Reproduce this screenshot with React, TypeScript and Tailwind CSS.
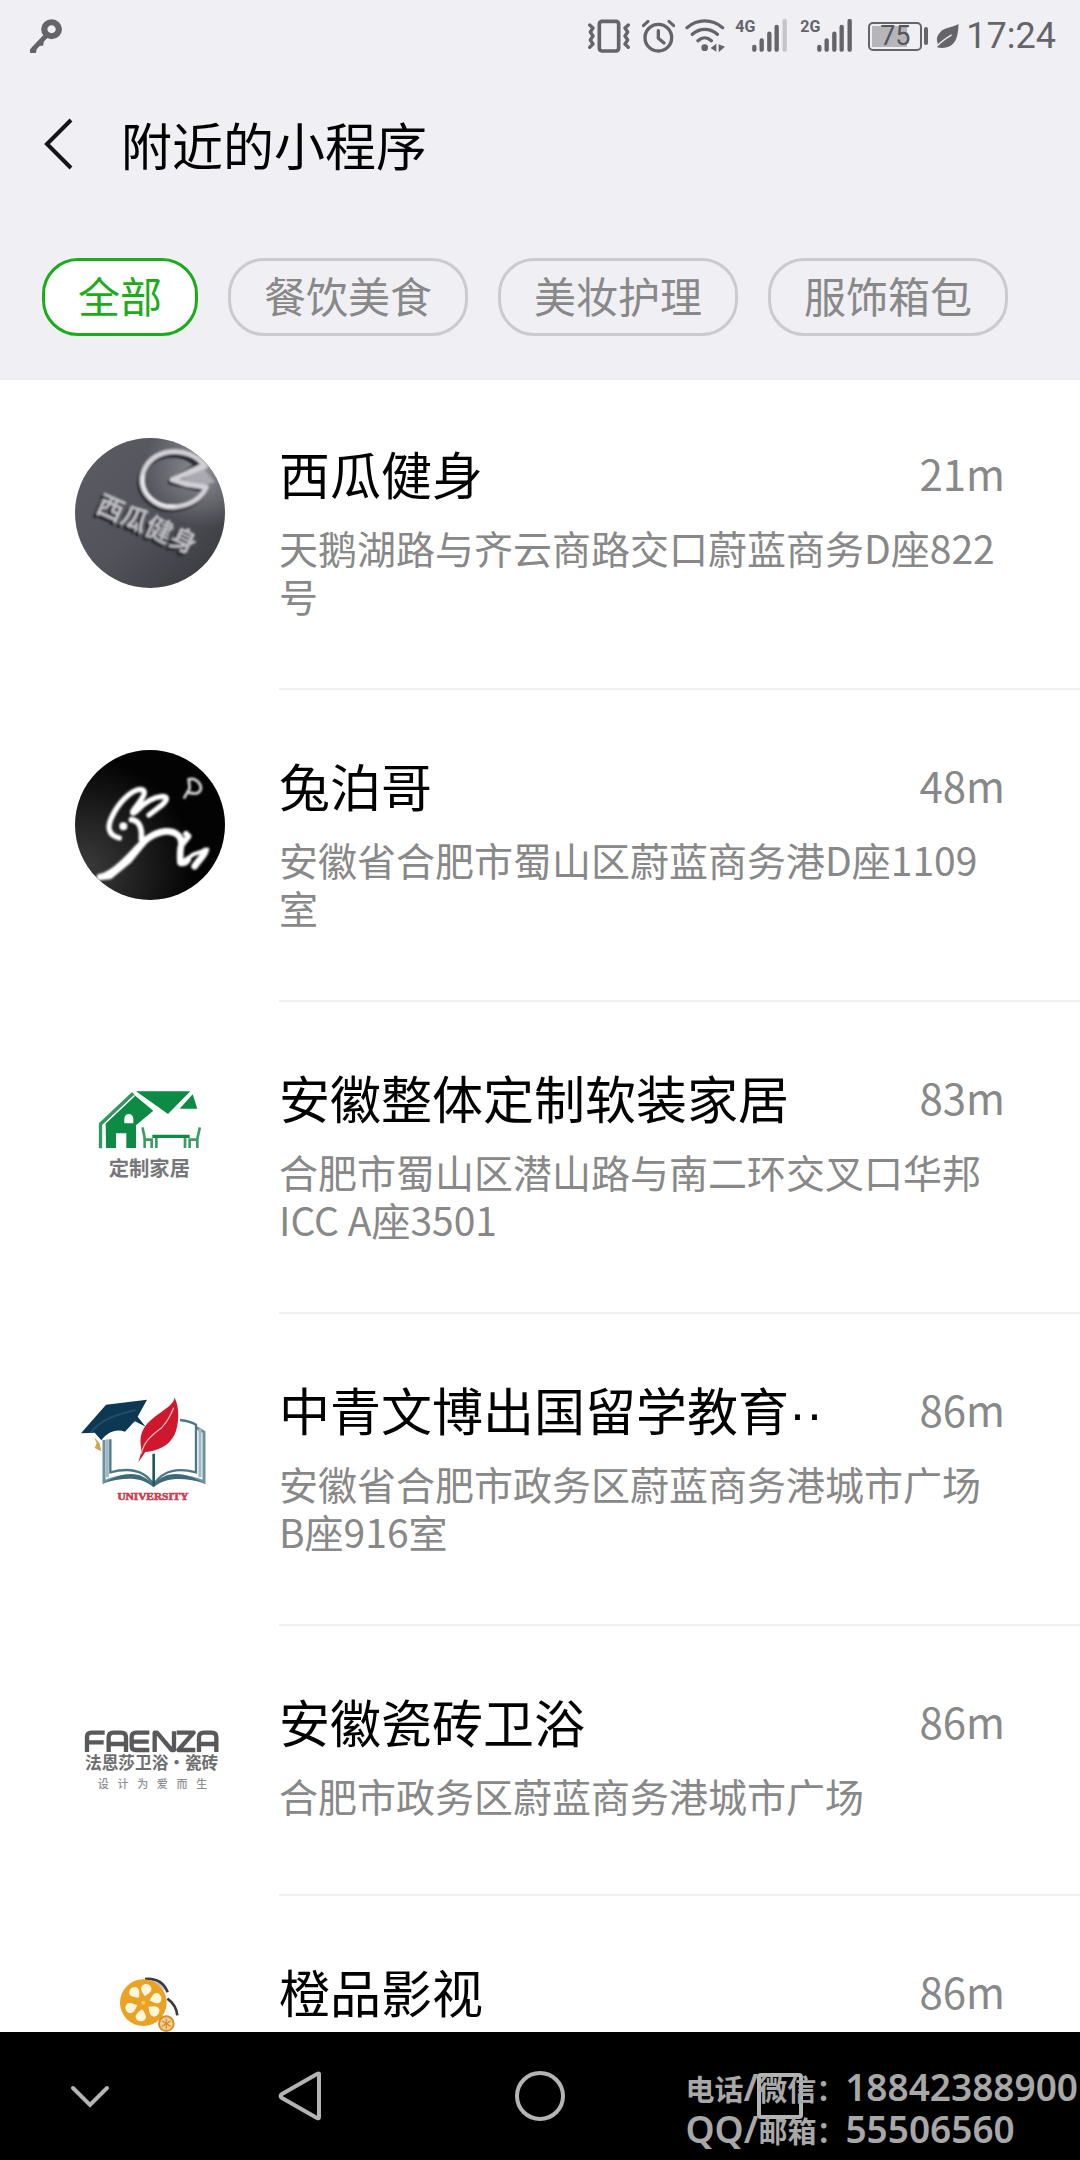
import type { ReactNode } from "react";

type Place = {
  name: string;
  clipped?: boolean;
  address?: string;
  distance: string;
  logo: ReactNode;
};

const GREY = "#646469";

function KeyIcon() {
  return (
    <svg className="h-[34px] w-8" viewBox="88 57 92 103" preserveAspectRatio="none" fill="none" aria-hidden="true">
      <circle cx="150" cy="88" r="21" stroke={GREY} strokeWidth="18" />
      <path d="M136 106L97 149" stroke={GREY} strokeWidth="14" />
      <path d="M88 148l12-8 7 9-2 11H88zM114 128l14-8-2 18h-18z" fill={GREY} />
    </svg>
  );
}

function VibrateIcon() {
  return (
    <svg className="h-[34px] w-[42px]" viewBox="57 58 126 102" fill="none" stroke={GREY} aria-hidden="true">
      <rect x="91" y="65" width="58" height="89" rx="8" strokeWidth="11" />
      <path d="M62 76l10 9-8 12 8 12-8 12 8 12-10 10M178 76l-10 9 8 12-8 12 8 12-8 12 10 10" strokeWidth="10" strokeLinecap="round" strokeLinejoin="round" />
    </svg>
  );
}

function AlarmIcon() {
  return (
    <svg className="h-[34px] w-[33px]" viewBox="219 58 99 102" fill="none" stroke={GREY} strokeLinecap="round" aria-hidden="true">
      <circle cx="268" cy="114" r="40" strokeWidth="10" />
      <path d="M268 93v23l17 14" strokeWidth="10" strokeLinejoin="round" />
      <path d="M223 78l14-13M314 78l-14-13" strokeWidth="9" />
    </svg>
  );
}

function WifiIcon() {
  return (
    <svg className="h-[34px] w-10" viewBox="346 58 120 102" fill="none" stroke={GREY} strokeLinecap="round" aria-hidden="true">
      <path d="M352 84c32-27 74-27 107 0M368 104c22-20 53-20 75 0M385 123c12-11 28-11 40 0" strokeWidth="10" />
      <circle cx="405" cy="144" r="10" fill={GREY} stroke="none" />
      <path d="M440 132v24l-17-11zM447 134v24l19-17z" fill={GREY} stroke="none" />
    </svg>
  );
}

function Signal({ label, weak }: { label: string; weak?: boolean }) {
  return (
    <div className="flex h-[34px] items-start">
      <span className="w-[17px] text-[16px] leading-4 font-bold whitespace-nowrap">{label}</span>
      <svg className="h-[34px] w-[35px]" viewBox="550 58 105 102" stroke={GREY} strokeWidth="13" strokeLinecap="round" aria-hidden="true">
        <path d="M557 142v8M579 122v28M602 102v48M624 82v68" />
        <path d="M648 64v86" stroke={weak ? "#c5c5ca" : GREY} />
      </svg>
    </div>
  );
}

function Battery() {
  return (
    <div className="flex items-center gap-[2px]">
      <div className="flex h-[29px] w-[54px] rounded-[5px] border-2 border-[#646469] p-[2px]">
        <div className="relative flex flex-1 items-center justify-center">
          <div className="absolute inset-y-0 left-0 w-3/4 bg-[#b5b5ba]" />
          <span className="relative text-[27px] leading-[21px] text-[#55555a]">75</span>
        </div>
      </div>
      <div className="h-[18px] w-1 rounded-sm bg-[#646469]" />
    </div>
  );
}

function LeafIcon() {
  return (
    <svg className="h-6 w-[23px]" viewBox="1099 69 69 73" aria-hidden="true">
      <path d="M1167 69c-15 10-43 10-55 24-12 12-13 25-8 35l-2 12c12 3 30 3 43-6 18-13 21-38 22-65z" fill={GREY} />
      <path d="M1102 136c12-14 26-23 44-34" fill="none" stroke="#efeff4" strokeWidth="4" />
    </svg>
  );
}

function FitnessLogo() {
  return (
    <svg className="size-full" viewBox="45 54 450 450" role="img" aria-label="西瓜健身">
      <defs>
        <linearGradient id="steel" x1="0" y1="0" x2="1" y2="1">
          <stop offset="0" stopColor="#5c5c64" />
          <stop offset=".5" stopColor="#53535b" />
          <stop offset="1" stopColor="#36363d" />
        </linearGradient>
        <radialGradient id="glare" cx=".86" cy=".2" r=".4">
          <stop offset="0" stopColor="#a9a9b0" stopOpacity=".7" />
          <stop offset="1" stopColor="#a9a9b0" stopOpacity="0" />
        </radialGradient>
        <filter id="soft" x="-20%" y="-20%" width="140%" height="140%"><feGaussianBlur stdDeviation="2.5" /></filter>
      </defs>
      <path d="M45 54h450v450H45z" fill="url(#steel)" />
      <path d="M45 54h450v450H45z" fill="url(#glare)" />
      <g filter="url(#soft)">
        <path d="M345 190l85-45 35 42-45 12z" fill="#aaaab0" />
        <g fill="none" strokeLinejoin="round">
          <path d="M418 130C375 78 275 86 249 160c-18 60 40 106 96 100 45-3 81-27 94-58l-59-13-43-10z" stroke="#2c2c33" strokeWidth="17" transform="translate(-5 7)" />
          <path d="M436 138C385 72 270 82 249 160c-14 60 40 106 96 100 45-3 81-27 94-58l-59-9-43-14z" stroke="#d0d0d5" strokeWidth="15" />
          <path d="M250 165c-10 55 42 98 95 92" stroke="#eeeef1" strokeWidth="7" />
          <path d="M337 179l88-42" stroke="#d0d0d5" strokeWidth="12" />
        </g>
        <g transform="rotate(24 110 260)" fontFamily="'Noto Sans CJK SC'" fontWeight="700" fontSize="80">
          <text x="104" y="287" fill="#26262d">西瓜健身</text>
          <text x="110" y="275" fill="#bcbcc2">西瓜健身</text>
        </g>
      </g>
    </svg>
  );
}

function RabbitLogo() {
  return (
    <svg className="size-full" viewBox="45 45 450 450" role="img" aria-label="兔泊哥">
      <defs>
        <radialGradient id="night" cx=".05" cy=".8" r=".75">
          <stop offset="0" stopColor="#3c3c3c" />
          <stop offset="1" stopColor="#030303" />
        </radialGradient>
        <filter id="glow" x="-10%" y="-10%" width="120%" height="120%"><feGaussianBlur stdDeviation="2.5" /></filter>
      </defs>
      <path d="M45 45h450v450H45z" fill="url(#night)" />
      <g filter="url(#glow)" fill="none" stroke="#fff" strokeLinecap="round" strokeLinejoin="round">
        <path d="M178 309c-32-8-38-30-23-62 19-42 58-84 88-84 24 4 0 31-24 65-5 10 5 7 13-2 22-24 48-39 74-42 21 0 14 12 2 24l-41 32" strokeWidth="16" />
        <path d="M214 254c24 2 33 25 30 58" strokeWidth="17" />
        <path d="M120 426c25-4 54-26 87-60 34-34 58-72 110-77 32-1 49 16 47 40-5 20-4 38-3 54 8 2 16-1 22-9" strokeWidth="20" />
        <path d="M368 382l32-24 42-14" strokeWidth="12" />
        <path d="M436 348c-4 16-20 26-32 46" strokeWidth="20" />
        <path d="M126 428l24-2 60-50 43-53" strokeWidth="14" />
        <path d="M378 296l8 8-16 20" strokeWidth="17" />
        <path d="M386 132l3 28-16 28M386 134c20-10 40 14 36 30-6 14-18 13-36 9" stroke="#ddd" strokeWidth="8" />
      </g>
      <circle cx="190" cy="274" r="12" fill="#fff" filter="url(#glow)" />
    </svg>
  );
}

function HomeLogo() {
  return (
    <svg className="size-full" viewBox="45 6 450 450" role="img" aria-label="定制家居">
      <g fill="#0d8a43">
        <path d="M137 190L224 106l56 46-52 44v68h-29v-44h-31v44h-30z" />
        <path d="M228 94h163l-67 68zM398 103l14 43h-53z" />
        <path d="M277 224h112v10H277z" />
      </g>
      <path d="M122 265v-73l98-92" fill="none" stroke="#31985f" strokeWidth="11" />
      <path d="M129 265v-69l94-89" fill="none" stroke="#fff" strokeWidth="4" />
      <path d="M193 190v-14c0-19 27-19 27 0v14z" fill="#fff" />
      <path d="M248 202c1 14 5 19 6 36v26M250 239h25v25M289 264v-30M419 202c-1 14-5 19-7 36v26M416 239h-27v25M375 264v-30" fill="none" stroke="#3b9c66" strokeWidth="8" />
      <text x="268" y="349" textAnchor="middle" fontFamily="'Noto Sans CJK SC'" fontWeight="700" fontSize="61" fill="#77777b">定制家居</text>
    </svg>
  );
}

function UniversityLogo() {
  return (
    <svg className="size-full" viewBox="45 12 450 450" role="img" aria-label="University">
      <path d="M132 210v126c52-24 101-27 149 10 48-37 98-32 151-10V186l-24-14" fill="#fff" stroke="#6b929e" strokeWidth="9" />
      <path d="M151 208v99c57-15 104-6 130 38 26-44 71-53 127-38V164c-13-8-25-11-48-14" fill="none" stroke="#4c7787" strokeWidth="7" />
      <path d="M142 208v114M420 176v146" stroke="#9fb9c2" strokeWidth="9" />
      <path d="M137 337c51-32 111-38 143 12 31-50 90-44 147-12-55-15-112-16-147 14-36-32-88-28-143-14z" fill="#3f6979" />
      <path d="M281 251v96" stroke="#25556a" strokeWidth="8" />
      <path d="M63 190l75-86 123-15-28 51 24 30-32-16c-11 9-18 20-30 31-28-9-52 1-71 26l-20-23z" fill="#0d3854" />
      <path d="M92 188c30-40 76-54 135-68" fill="none" stroke="#254c67" strokeWidth="6" />
      <path d="M102 201l8 18-6 15 20 10-5-24" fill="#d5a450" />
      <path d="M344 83c-7 33-68 50-93 93-16 29-7 49-7 70l-9 31 21-31c36-3 71-18 87-51 14-29 17-81 1-112z" fill="#cf172d" />
      <path d="M243 252c9-36 27-53 62-79 17-18 25-32 36-60" fill="none" stroke="#f6b4b5" strokeWidth="4" />
      <text x="279" y="390" textAnchor="middle" fontFamily="'Liberation Serif'" fontWeight="700" fontSize="34" fill="#cc4053" stroke="#cc4053" strokeWidth="2">UNIVERSITY</text>
    </svg>
  );
}

function FaenzaLogo() {
  return (
    <svg className="size-full" viewBox="45 -42 450 450" role="img" aria-label="FAENZA 法恩莎卫浴·瓷砖">
      <g fill="none" stroke="#59595c" strokeWidth="13" strokeLinejoin="round">
        <path d="M134 98H94q-13 0-13 13v45M81 127h50" />
        <path d="M146 156v-44q0-14 14-14h24q14 0 14 14v44M146 132h52" />
        <path d="M268 98h-40q-13 0-13 13v26q0 13 13 13h40M215 125h51" />
        <path d="M284 156V98h7l44 52h7V94" />
        <path d="M350 98h51l-46 52h51" />
        <path d="M417 156v-44q0-14 14-14h24q14 0 14 14v44M417 132h52" />
      </g>
      <text x="275" y="208" textAnchor="middle" fontFamily="'Noto Sans CJK SC'" fontWeight="700" fontSize="50" fill="#6d6d70">法恩莎卫浴·瓷砖</text>
      <g fontFamily="'Noto Sans CJK SC'" fontWeight="500" fontSize="33" fill="#8d8d91" textAnchor="middle">
        {["设", "计", "为", "爱", "而", "生"].map((c, i) => (
          <text key={c} x={130 + i * 59} y="263">{c}</text>
        ))}
      </g>
    </svg>
  );
}

function OrangeLogo() {
  return (
    <svg className="size-full" viewBox="45 18 450 450" role="img" aria-label="橙品影视">
      <path d="M255 87c36-3 58 14 68 40M322 146c20 14 28 30 30 50" fill="none" stroke="#3b3b40" strokeWidth="8" />
      <path d="M270 93c22 4 34 14 42 27" fill="none" stroke="#bbb" strokeWidth="4" />
      <circle cx="250" cy="158" r="70" fill="#e9a223" />
      <g fill="#fff6dc">
        {[12, 72, 128, 190, 248, 320].map((a) => (
          <path key={a} d="M250 138c-11-11-19-19-14-29 6-10 22-10 28 0 5 10-3 18-14 29z" transform={`rotate(${a} 250 158)`} />
        ))}
      </g>
      <circle cx="250" cy="158" r="6" fill="#f6c65d" />
      <circle cx="319" cy="221" r="22" fill="#f2d199" stroke="#d68f2b" strokeWidth="6" />
      <path d="M319 206v30M306 213l26 16M306 229l26-16" stroke="#d68f2b" strokeWidth="4" />
    </svg>
  );
}

const categories = ["全部", "餐饮美食", "美妆护理", "服饰箱包"];

const places: Place[] = [
  { name: "西瓜健身", distance: "21m", address: "天鹅湖路与齐云商路交口蔚蓝商务D座822号", logo: <FitnessLogo /> },
  { name: "兔泊哥", distance: "48m", address: "安徽省合肥市蜀山区蔚蓝商务港D座1109室", logo: <RabbitLogo /> },
  { name: "安徽整体定制软装家居", distance: "83m", address: "合肥市蜀山区潜山路与南二环交叉口华邦ICC A座3501", logo: <HomeLogo /> },
  { name: "中青文博出国留学教育", clipped: true, distance: "86m", address: "安徽省合肥市政务区蔚蓝商务港城市广场B座916室", logo: <UniversityLogo /> },
  { name: "安徽瓷砖卫浴", distance: "86m", address: "合肥市政务区蔚蓝商务港城市广场", logo: <FaenzaLogo /> },
  { name: "橙品影视", distance: "86m", logo: <OrangeLogo /> },
];

function StatusBar() {
  return (
    <div className="flex h-[72px] items-center justify-between pr-6 pl-[30px] font-[Roboto,sans-serif] text-[#646469]">
      <KeyIcon />
      <div className="flex items-center">
        <VibrateIcon />
        <div className="ml-3"><AlarmIcon /></div>
        <div className="ml-[10px]"><WifiIcon /></div>
        <div className="ml-[10px]"><Signal label="4G" weak /></div>
        <div className="ml-[13px]"><Signal label="2G" /></div>
        <div className="ml-4"><Battery /></div>
        <div className="ml-2"><LeafIcon /></div>
        <time className="ml-[7px] text-4xl leading-[38px]">17:24</time>
      </div>
    </div>
  );
}

function PlaceRow({ place }: { place: Place }) {
  return (
    <li className="flex min-h-[270px] gap-[54px] pl-[75px]">
      <div className="mt-[60px] size-[150px] shrink-0 overflow-hidden rounded-full">{place.logo}</div>
      <div className="min-w-0 flex-1 border-b-2 border-[#f0f0f0] pt-14 pr-[75px] pb-[69px]">
        <div className="flex items-center justify-between">
          <h2 className="text-[51px] leading-[78px] whitespace-nowrap text-black">
            {place.name}
            {place.clipped && <span className="font-['Liberation_Sans',sans-serif] leading-none">··</span>}
          </h2>
          <span className="text-[42px] leading-[78px] text-[#888888]">{place.distance}</span>
        </div>
        {place.address && <p className="mt-[11px] text-[39px] leading-[48px] text-[#888888]">{place.address}</p>}
      </div>
    </li>
  );
}

function NavBar() {
  const button = "flex h-full items-center justify-center";
  return (
    <nav className="relative grid h-32 shrink-0 grid-cols-[3fr_4fr_4fr_4fr_3fr] bg-black" aria-label="系统导航">
      <button className={button} aria-label="收起">
        <svg className="h-6 w-10" viewBox="0 0 40 24" fill="none" stroke="#b4b4b4" strokeWidth="4" strokeLinecap="round"><path d="M3 4l17 17L37 4" /></svg>
      </button>
      <button className={button} aria-label="返回">
        <svg className="h-[50px] w-11" viewBox="0 0 44 50" fill="none" stroke="#b4b4b4" strokeWidth="4" strokeLinejoin="round"><path d="M41 3q0-1-2 0L4 23q-3 2 0 4l35 20q2 1 2-1z" /></svg>
      </button>
      <button className={button} aria-label="主屏幕">
        <span className="size-[50px] rounded-full border-4 border-[#b4b4b4]" />
      </button>
      <button className={button} aria-label="最近任务">
        <span className="size-[46px] rounded-[4px] border-4 border-[#b4b4b4]" />
      </button>
      <div className="pointer-events-none absolute right-[2px] bottom-[10px] font-['Noto_Sans','Noto_Sans_CJK_SC',sans-serif] text-[37px] font-semibold whitespace-nowrap text-[#a8a8a8]">
        <p className="leading-[42px]"><span className="text-[29px] leading-[29px] font-bold">电话</span>/<span className="text-[29px] leading-[29px] font-bold">微信：</span>18842388900</p>
        <p className="leading-[42px]">QQ/<span className="text-[29px] leading-[29px] font-bold">邮箱：</span>55506560</p>
      </div>
    </nav>
  );
}

export default function App() {
  return (
    <div lang="zh-CN" className="flex h-screen flex-col bg-white font-['Noto_Sans_CJK_SC',sans-serif]">
      <header className="relative shrink-0 bg-[#efeff4] shadow-[0_2px_0_#ececf0]">
        <StatusBar />
        <div className="flex h-36 items-center pl-11">
          <button aria-label="返回" className="mr-12">
            <svg className="h-[52px] w-[29px]" viewBox="0 0 29 52" fill="none" stroke="#16161a" strokeWidth="4"><path d="M27 2L3 26l24 24" /></svg>
          </button>
          <h1 className="text-[51px] leading-[76px] text-black">附近的小程序</h1>
        </div>
        <div className="flex gap-[30px] overflow-hidden px-[42px] pt-[42px] pb-[42px]">
          {categories.map((c, i) => (
            <button
              key={c}
              aria-pressed={i === 0}
              className={
                i === 0
                  ? "h-[78px] shrink-0 rounded-[36px] border-[3px] border-[#1aad19] bg-white px-[33px] pb-1 text-[42px] leading-[68px] text-[#1aad19]"
                  : "h-[78px] shrink-0 rounded-[36px] border-[3px] border-[#cbcbcd] px-[33px] pb-1 text-[42px] leading-[68px] text-[#888888]"
              }
            >
              {c}
            </button>
          ))}
        </div>
      </header>
      <main className="min-h-0 flex-1 overflow-y-auto [scrollbar-width:none]">
        <ul>
          {places.map((p) => (
            <PlaceRow key={p.name} place={p} />
          ))}
        </ul>
      </main>
      <NavBar />
    </div>
  );
}
